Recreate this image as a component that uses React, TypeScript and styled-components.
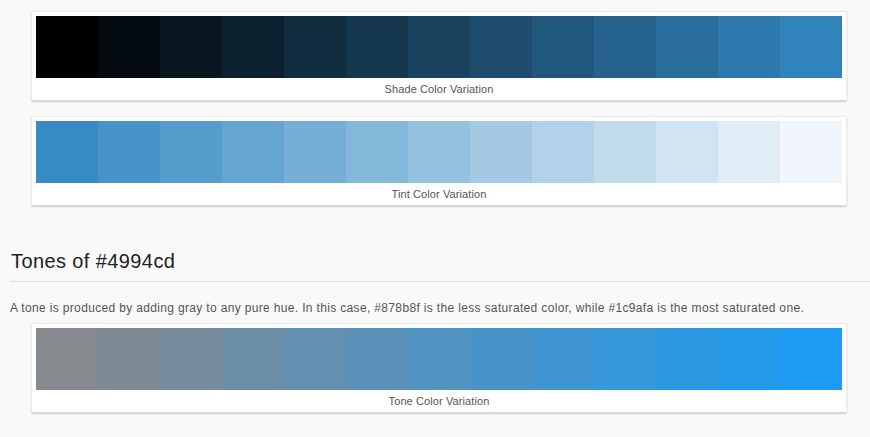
import React, { FC } from "react";
import styled, { createGlobalStyle } from "styled-components";

type RGB = [number, number, number];

const GlobalStyle = createGlobalStyle`
  html, body {
    margin: 0;
    padding: 0;
    background: #f9f9f9;
  }
  body {
    font-family: "Liberation Sans", Arial, sans-serif;
    color: #555;
  }
`;

const mix = (a: RGB, b: RGB, t: number) =>
  `rgb(${a.map((v, i) => Math.round(v + (b[i] - v) * t)).join(",")})`;

const range = (from: RGB, to: RGB, steps: number, divisor: number) =>
  Array.from({ length: steps }, (_, i) => mix(from, to, i / divisor));

const shades = range([0, 0, 0], [49, 131, 188], 13, 12);
const tints = range([55, 139, 197], [255, 255, 255], 13, 13);
const tones = range([135, 138, 142], [27, 155, 243], 13, 12);

const Page = styled.div`
  padding: 11px 0 24px 10px;
`;

const Card = styled.div<{ $gap?: number }>`
  box-sizing: border-box;
  width: 816px;
  margin: ${({ $gap }) => $gap ?? 0}px 0 0 21px;
  padding: 5px 5px 0;
  background: #fff;
  border: 1px solid #ececec;
  border-bottom-color: #d8d8d8;
  box-shadow: 0 1px 2px rgba(0, 0, 0, 0.18);
  border-radius: 2px;
`;

const Strip = styled.div`
  display: grid;
  grid-template-columns: repeat(13, 62px);
  height: 62px;
  margin: -1px 0 0 -1px;
`;

const Swatch = styled.div<{ $color: string }>`
  background: ${({ $color }) => $color};
`;

const Caption = styled.div`
  height: 22px;
  line-height: 23px;
  text-align: center;
  font-size: 11px;
  letter-spacing: 0.1px;
  color: #555;
`;

const Heading = styled.h2`
  margin: 43px 0 0;
  padding: 0 0 8px 1px;
  border-bottom: 1px solid #dedede;
  font-size: 20px;
  letter-spacing: 0.4px;
  line-height: 24px;
  font-weight: normal;
  color: #222;
`;

const Lead = styled.p`
  margin: 18px 0 7px;
  font-size: 12px;
  letter-spacing: 0.34px;
  line-height: 16px;
  color: #555;
`;

const Palette: FC<{ colors: string[]; label: string; gap?: number }> = ({
  colors,
  label,
  gap,
}) => (
  <Card $gap={gap}>
    <Strip>
      {colors.map((c, i) => (
        <Swatch key={i} $color={c} />
      ))}
    </Strip>
    <Caption>{label}</Caption>
  </Card>
);

export default function App() {
  return (
    <>
      <GlobalStyle />
      <Page>
        <Palette colors={shades} label="Shade Color Variation" />
        <Palette colors={tints} label="Tint Color Variation" gap={15} />
        <Heading>Tones of #4994cd</Heading>
        <Lead>
          A tone is produced by adding gray to any pure hue. In this case, #878b8f is the less
          saturated color, while #1c9afa is the most saturated one.
        </Lead>
        <Palette colors={tones} label="Tone Color Variation" />
      </Page>
    </>
  );
}
